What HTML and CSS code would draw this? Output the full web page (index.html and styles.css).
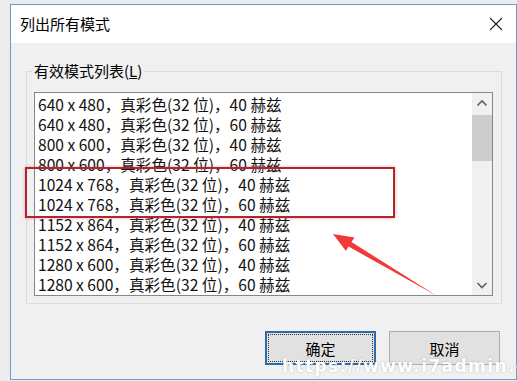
FILE: index.html
```html
<!DOCTYPE html>
<html lang="zh-CN">
<head>
<meta charset="utf-8">
<title>列出所有模式</title>
<link rel="stylesheet" href="styles.css">
</head>
<body>
<div class="window">
  <div class="titlebar">
    <span class="title">列出所有模式</span>
    <svg class="close" width="14" height="14" viewBox="0 0 14 14"><path d="M1 1L13 13M13 1L1 13" stroke="#222" stroke-width="1.1" fill="none"/></svg>
  </div>
  <div class="content">
    <fieldset class="group">
      <legend class="legend">有效模式列表(<u>L</u>)</legend>
      <div class="listbox">
        <ul class="rows">
          <li>640 x 480，真彩色(32 位)，40 赫兹</li>
          <li>640 x 480，真彩色(32 位)，60 赫兹</li>
          <li>800 x 600，真彩色(32 位)，40 赫兹</li>
          <li>800 x 600，真彩色(32 位)，60 赫兹</li>
          <li>1024 x 768，真彩色(32 位)，40 赫兹</li>
          <li>1024 x 768，真彩色(32 位)，60 赫兹</li>
          <li>1152 x 864，真彩色(32 位)，40 赫兹</li>
          <li>1152 x 864，真彩色(32 位)，60 赫兹</li>
          <li>1280 x 600，真彩色(32 位)，40 赫兹</li>
          <li>1280 x 600，真彩色(32 位)，60 赫兹</li>
        </ul>
        <div class="scrollbar">
          <svg class="arrow" width="20" height="20" viewBox="0 0 20 20"><path d="M5.5 12.5L10 8L14.5 12.5" stroke="#606060" stroke-width="1.6" fill="none"/></svg>
          <div class="track"><div class="thumb"></div></div>
          <svg class="arrow" width="20" height="20" viewBox="0 0 20 20"><path d="M5.5 8L10 12.5L14.5 8" stroke="#606060" stroke-width="1.6" fill="none"/></svg>
        </div>
      </div>
    </fieldset>
    <div class="buttons">
      <button class="btn btn-default"><span class="focus">确定</span></button>
      <button class="btn">取消</button>
    </div>
  </div>
</div>
<div class="highlight"></div>
<svg class="annot-arrow" width="517" height="381" viewBox="0 0 517 381">
  <polygon points="333,234 354.5,237.5 351.5,242 437,296 348.5,246.5 346,251" fill="#f2393a"/>
</svg>
<div class="watermark">https://www.i7admin.cc</div>
</body>
</html>
```
FILE: styles.css
```css
html, body {
  margin: 0;
  padding: 0;
}
body {
  width: 517px;
  height: 381px;
  background: #ececec;
  font-family: "Noto Sans CJK SC", "Noto Sans", sans-serif;
  color: #000;
  position: relative;
  overflow: hidden;
}
.window {
  margin: 4px 0 0 10px;
  width: 505px;
  height: 374px;
  border: 1px solid #6f9bc8;
  background: #f0f0f0;
  display: flex;
  flex-direction: column;
}
.titlebar {
  height: 38px;
  background: #fff;
  display: flex;
  align-items: center;
  justify-content: space-between;
  padding: 0 13px 0 9px;
}
.title {
  font-size: 15px;
  line-height: 20px;
  color: #000;
}
.close {
  display: block;
}
.content {
  flex: 1;
  display: flex;
  flex-direction: column;
  padding: 18px 15px 0 15px;
}
.group {
  margin: 0;
  padding: 0 8px 7px 7px;
  border: 1px solid #dcdcdc;
  width: 476px;
  box-sizing: border-box;
}
.legend {
  padding: 0 2px;
  margin-left: -2px;
  font-size: 15px;
  line-height: 20px;
  margin-bottom: 11px;
}
.listbox {
  border: 1px solid #828790;
  background: #fff;
  height: 204px;
  box-sizing: border-box;
  display: flex;
}
.rows {
  list-style: none;
  margin: 0;
  padding: 1px 0 0 3px;
  flex: 1;
}
.rows li {
  height: 20px;
  line-height: 20px;
  font-size: 15.6px;
  white-space: nowrap;
  color: #111;
}
.scrollbar {
  width: 20px;
  background: #f0f0f0;
  display: flex;
  flex-direction: column;
}
.arrow {
  display: block;
  flex: none;
}
.track {
  flex: 1;
  padding-top: 2px;
}
.thumb {
  height: 46px;
  background: #cdcdcd;
}
.buttons {
  display: flex;
  justify-content: flex-end;
  gap: 13px;
  margin-top: 27px;
  padding-right: 1px;
}
.btn {
  width: 111px;
  height: 34px;
  box-sizing: border-box;
  background: #e1e1e1;
  border: 1px solid #adadad;
  font-family: "Noto Sans CJK SC", "Noto Sans", sans-serif;
  font-size: 15px;
  color: #000;
  padding: 0;
  display: flex;
  align-items: center;
  justify-content: center;
}
.btn-default {
  border: 2px solid #2b6ba8;
  padding: 1px;
}
.focus {
  flex: 1;
  align-self: stretch;
  display: flex;
  align-items: center;
  justify-content: center;
  border: 1px dotted #333;
}
.highlight {
  position: absolute;
  left: 25px;
  top: 167px;
  width: 366px;
  height: 47px;
  border: 2px solid #b0262e;
  box-shadow: 0 0 3px rgba(230, 60, 60, 0.5);
}
.annot-arrow {
  position: absolute;
  left: 0;
  top: 0;
}
.watermark {
  position: absolute;
  left: 282px;
  top: 356px;
  font-family: "DejaVu Sans", sans-serif;
  font-weight: bold;
  font-size: 17px;
  line-height: 20px;
  letter-spacing: 1.4px;
  color: #fff;
  text-shadow: 0 0 2px rgba(0, 0, 0, 0.25);
  white-space: nowrap;
}
```
